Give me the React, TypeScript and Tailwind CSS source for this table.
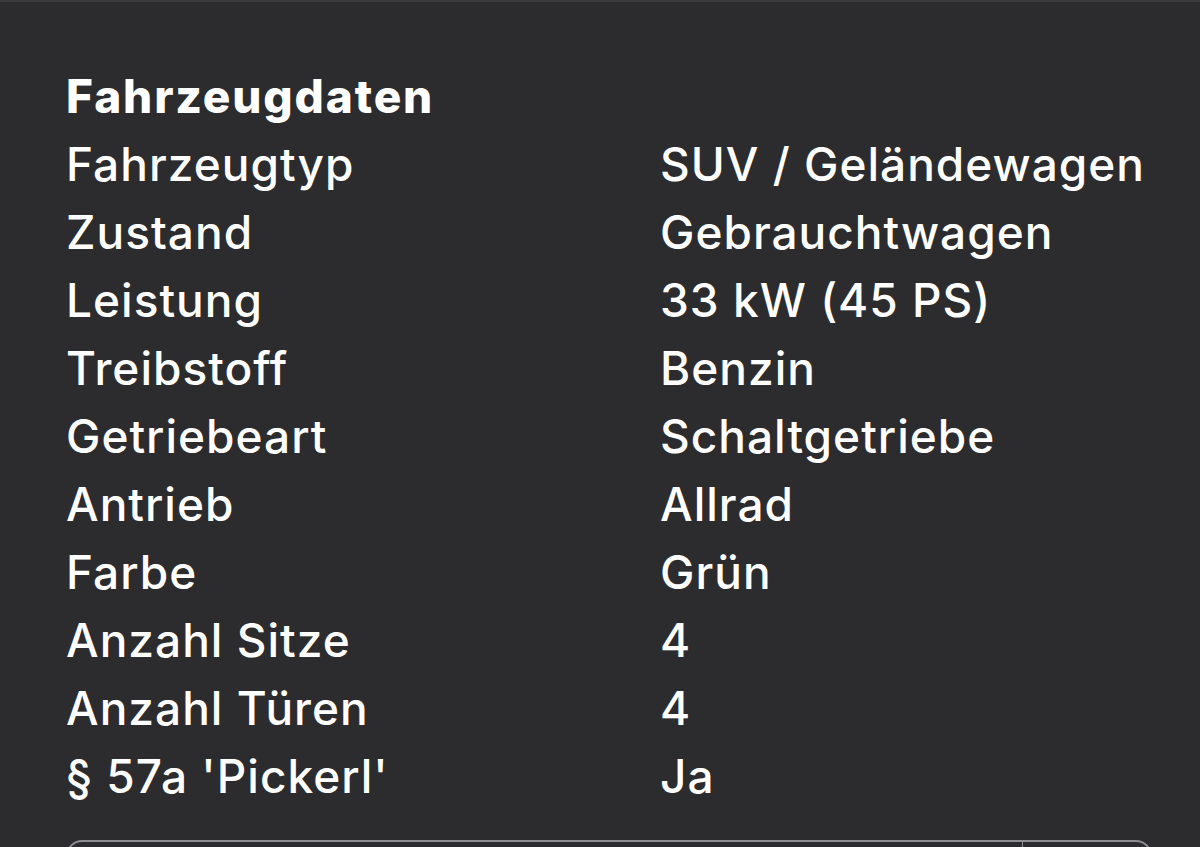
const rows: [string, string][] = [
  ["Fahrzeugtyp", "SUV / Geländewagen"],
  ["Zustand", "Gebrauchtwagen"],
  ["Leistung", "33 kW (45 PS)"],
  ["Treibstoff", "Benzin"],
  ["Getriebeart", "Schaltgetriebe"],
  ["Antrieb", "Allrad"],
  ["Farbe", "Grün"],
  ["Anzahl Sitze", "4"],
  ["Anzahl Türen", "4"],
  ["§ 57a 'Pickerl'", "Ja"],
];

export default function App() {
  return (
    <div className="h-[847px] w-[1200px] overflow-hidden bg-[#2c2c2e] border-t-2 border-[#3a3a3c] text-white font-['Inter',sans-serif]">
      <div className="pl-[66px] pr-[48px] pt-[60px] text-[46px] leading-[68px]">
        <h2 className="font-extrabold tracking-[0.04em]">Fahrzeugdaten</h2>
        {rows.map(([label, value]) => (
          <div key={label} className="grid grid-cols-[594px_1fr] font-medium tracking-[0.022em]">
            <span>{label}</span>
            <span>{value}</span>
          </div>
        ))}
        {/* next section starts below */}
        <div className="mt-[30px] h-[120px] rounded-[16px] border-2 border-[#8e8e93] flex justify-end">
          <div className="w-[128px] border-l border-[#8e8e93]" />
        </div>
      </div>
    </div>
  );
}
